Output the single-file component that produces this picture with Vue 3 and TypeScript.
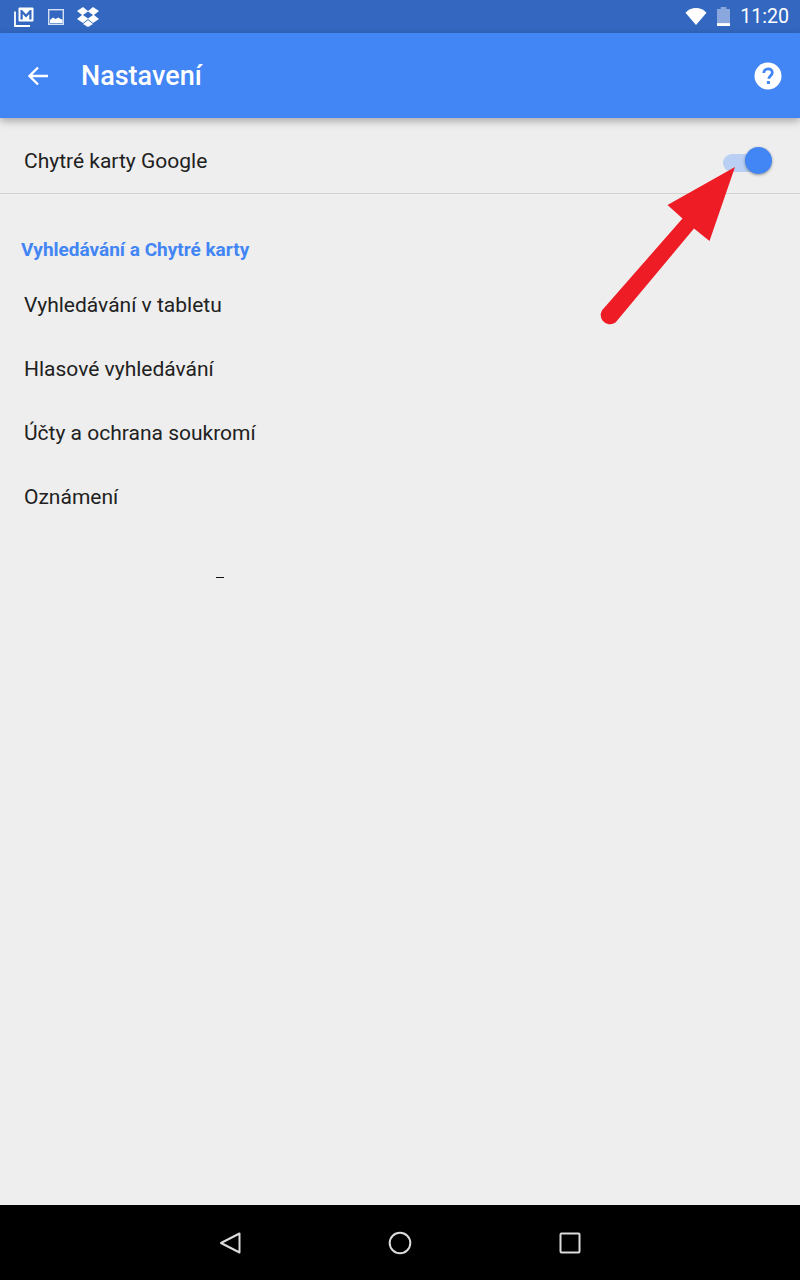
<script setup lang="ts">
// Nastavení — seznam položek pod sekcí Vyhledávání a Chytré karty
const items = ['Vyhledávání v tabletu', 'Hlasové vyhledávání', 'Účty a ochrana soukromí', 'Oznámení']
</script>

<template>
  <div class="screen">
    <header class="status">
      <div class="status-left">
        <svg class="ic-mail" viewBox="0 0 20 20" aria-hidden="true">
          <rect x="4.500" y="0.500" width="15" height="14" rx="1" fill="#fff" />
          <path d="M6.500 12.500V3h1.500l4 4.200L16 3h1.500v9.500h-2.200V7l-3.300 3.400L8.700 7v5.500z" fill="#3367c0" />
          <path d="M1 4.500V19h15" fill="none" stroke="#fff" stroke-width="1.800" />
        </svg>
        <svg class="ic-image" viewBox="0 0 16 16" aria-hidden="true">
          <rect x="0.700" y="0.700" width="14.600" height="14.600" fill="none" stroke="#d5e0f2" stroke-width="1.400" />
          <path d="M2 14v-3l3-2.500 2.500 1.500 3-1.500 2 1.500 2 .5V14z" fill="#fff" />
        </svg>
        <svg class="ic-dropbox" viewBox="0 0 22 20" aria-hidden="true">
          <path d="M6 0 0 4l5 4-5 4 6 4 5-4 5 4 6-4-5-4 5-4-6-4-5 4zM11 4.500 16 8l-5 3.500L6 8z" fill="#fff" fill-rule="evenodd" />
          <path d="m6 17 5 3 5-3-5-4z" fill="#fff" />
        </svg>
      </div>
      <div class="status-right">
        <svg class="ic-wifi" viewBox="0 0 24 16" preserveAspectRatio="none" aria-hidden="true">
          <path d="M0.500 4.500C3.500 1.800 7.500 0 12 0s8.500 1.800 11.500 4.500L12 16z" fill="#fff" />
        </svg>
        <svg class="ic-battery" viewBox="0 0 14 20" preserveAspectRatio="none" aria-hidden="true">
          <path d="M4 0h6v2h4v18H0V2h4z" fill="#8ba8de" />
          <path d="M0 17h14v3H0z" fill="#fff" />
        </svg>
        <span class="clock">11:20</span>
      </div>
    </header>

    <div class="appbar">
      <svg class="ic-back" viewBox="0 0 24 24" aria-hidden="true">
        <path d="M22 12H3.500M12 3.500 3.500 12l8.500 8.500" fill="none" stroke="#fff" stroke-width="2.400" />
      </svg>
      <h1 class="title">Nastavení</h1>
      <svg class="ic-help" viewBox="0 0 28 28" aria-hidden="true">
        <circle cx="14" cy="14" r="13.500" fill="#fff" />
        <path d="M9.800 11c0-2.600 1.900-4.200 4.300-4.200s4.200 1.500 4.200 3.800c0 3-3.400 3.300-3.400 6.200" fill="none" stroke="#4285f4" stroke-width="2.800" />
        <rect x="12.900" y="19" width="3" height="3" fill="#4285f4" />
      </svg>
    </div>

    <main class="content">
      <div class="master-row">
        <span>Chytré karty Google</span>
        <div class="switch">
          <div class="track"></div>
          <div class="thumb"></div>
        </div>
      </div>

      <div class="section-title">Vyhledávání a Chytré karty</div>
      <div v-for="item in items" :key="item" class="row">{{ item }}</div>

      <i class="dash"></i>

      <svg class="arrow" viewBox="0 0 800 400" aria-hidden="true">
        <path d="M735 167 667.500 205 682.500 218.500 604.500 307.500a7.500 7.500 0 0 0 11 15L694 228.500 709.500 241z" fill="#ee1c25" />
      </svg>
    </main>

    <footer class="navbar">
      <svg viewBox="0 0 24 24" aria-hidden="true">
        <path d="M21.500 2.500v19L3 12z" fill="none" stroke="#dcdcdc" stroke-width="2" stroke-linejoin="round" />
      </svg>
      <svg viewBox="0 0 24 24" aria-hidden="true">
        <circle cx="12" cy="12" r="10.300" fill="none" stroke="#dcdcdc" stroke-width="2" />
      </svg>
      <svg viewBox="0 0 24 24" aria-hidden="true">
        <rect x="2.500" y="2.500" width="19" height="19" rx="1" fill="none" stroke="#dcdcdc" stroke-width="2" />
      </svg>
    </footer>
  </div>
</template>

<style>
html,
body {
  margin: 0;
  background: #eeeeee;
}
</style>

<style scoped>
.screen {
  width: 800px;
  height: 1280px;
  display: flex;
  flex-direction: column;
  background: #eeeeee;
  font-family: Roboto, "Liberation Sans", sans-serif;
  color: #212121;
  overflow: hidden;
}
.status {
  height: 33px;
  flex: none;
  display: flex;
  align-items: center;
  justify-content: space-between;
  padding: 0 11px 0 14px;
  background: #3367c0;
}
.status-left,
.status-right {
  display: flex;
  align-items: center;
}
.ic-mail {
  width: 20px;
  height: 20px;
  margin-right: 14px;
}
.ic-image {
  width: 16px;
  height: 16px;
  margin-right: 13px;
}
.ic-dropbox {
  width: 22px;
  height: 20px;
}
.ic-wifi {
  width: 22px;
  height: 17px;
  margin-right: 10px;
}
.ic-battery {
  width: 13px;
  height: 19px;
  margin-right: 10px;
}
.clock {
  font-size: 19.6px;
  color: #fff;
}
.appbar {
  height: 85px;
  flex: none;
  display: flex;
  align-items: center;
  padding: 0 18px 0 26px;
  background: #4285f4;
  box-shadow: 0 3px 8px rgba(0, 0, 0, 0.3);
  position: relative;
  z-index: 2;
}
.ic-back {
  width: 24px;
  height: 24px;
}
.title {
  margin: 1px 0 0 31px;
  flex: 1;
  font-size: 27px;
  font-weight: 500;
  color: #fff;
}
.ic-help {
  width: 28px;
  height: 28px;
}
.content {
  flex: 1;
  position: relative;
}
.master-row {
  box-sizing: border-box;
  height: 76px;
  display: flex;
  align-items: center;
  justify-content: space-between;
  padding: 10px 28px 0 24px;
  border-bottom: 1px solid #d2d2d2;
  font-size: 21px;
}
.switch {
  width: 49px;
  height: 28px;
  position: relative;
}
.track {
  position: absolute;
  left: 0;
  right: 6px;
  top: 7px;
  height: 18px;
  border-radius: 9px;
  background: #b9cff3;
}
.thumb {
  position: absolute;
  right: 0;
  top: 0;
  width: 27px;
  height: 27px;
  border-radius: 50%;
  background: #4285f4;
  box-shadow: 0 1px 3px rgba(0, 0, 0, 0.4);
}
.section-title {
  margin: 45px 0 0 21px;
  height: 21px;
  line-height: 21px;
  font-size: 19px;
  font-weight: 700;
  color: #4285f4;
}
.row {
  height: 64px;
  line-height: 64px;
  padding-left: 24px;
  font-size: 21px;
}
.section-title + .row {
  margin-top: 13px;
}
.dash {
  position: absolute;
  left: 216px;
  top: 459px;
  width: 8px;
  height: 1px;
  background: #111;
}
.arrow {
  position: absolute;
  left: 0;
  top: -118px;
  width: 800px;
  height: 400px;
  pointer-events: none;
}
.navbar {
  height: 75px;
  flex: none;
  display: flex;
  align-items: center;
  justify-content: center;
  gap: 146px;
  background: #000;
}
.navbar svg {
  width: 24px;
  height: 24px;
}
</style>
